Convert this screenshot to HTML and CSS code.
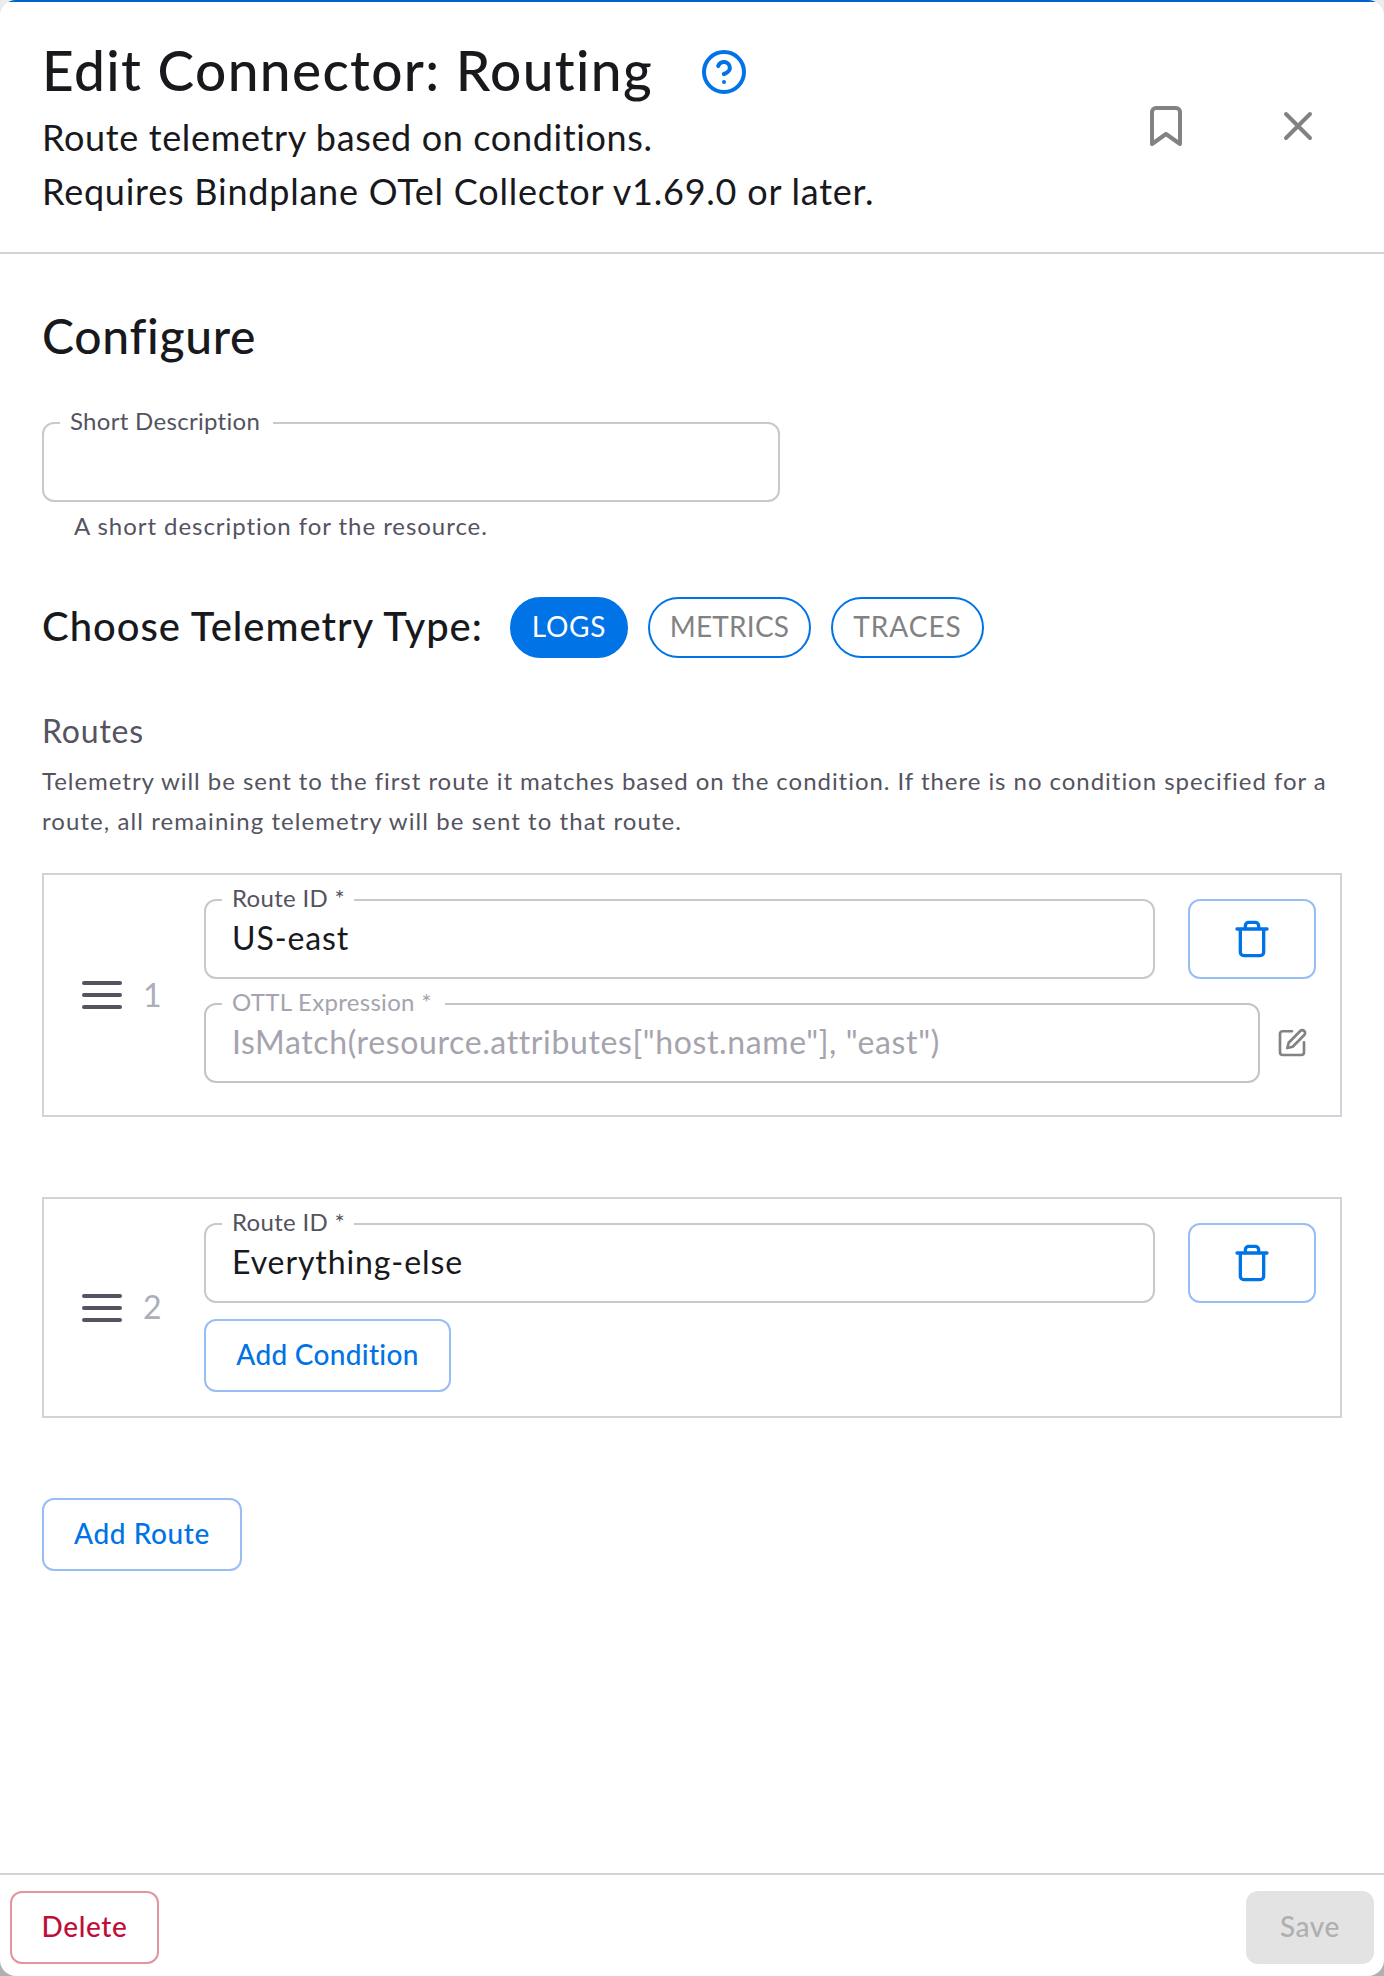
FILE: index.html
```html
<!DOCTYPE html>
<html lang="en">
  <head>
    <meta charset="UTF-8" />
    <meta name="viewport" content="width=device-width, initial-scale=1.0" />
    <title>Edit Connector: Routing</title>
    <link rel="stylesheet" href="styles.css">
  </head>
  <body>
    <div class="dialog">
      <div class="accent"></div>
      <header class="dialog-header">
        <div class="header-text">
          <div class="title-row">
            <h1>Edit Connector: Routing</h1>
            <svg class="icon help-icon" viewBox="0 0 24 24">
              <circle cx="12" cy="12" r="10" />
              <path d="M9.09 9a3 3 0 0 1 5.83 1c0 2-3 3-3 3" />
              <path d="M12 17h.01" />
            </svg>
          </div>
          <p class="subtitle sub-one">Route telemetry based on conditions.</p>
          <p class="subtitle sub-two">Requires Bindplane OTel Collector v1.69.0 or later.</p>
        </div>
        <div class="header-actions">
          <svg class="icon" viewBox="0 0 24 24">
            <path d="M19 21l-7-5-7 5V5a2 2 0 0 1 2-2h10a2 2 0 0 1 2 2z" />
          </svg>
          <svg class="icon" viewBox="0 0 24 24">
            <path d="M18 6L6 18M6 6l12 12" />
          </svg>
        </div>
      </header>

      <main class="dialog-content">
        <h2>Configure</h2>

        <fieldset class="field description-field">
          <legend>Short Description</legend>
        </fieldset>
        <p class="helper">A short description for the resource.</p>

        <div class="telemetry-row">
          <h3>Choose Telemetry Type:</h3>
          <div class="chips">
            <span class="chip chip-logs active">LOGS</span>
            <span class="chip chip-metrics">METRICS</span>
            <span class="chip chip-traces">TRACES</span>
          </div>
        </div>

        <h4>Routes</h4>
        <p class="routes-help">
          Telemetry will be sent to the first route it matches based on the condition. If there is no condition specified for a<br />
          <span class="second-line">route, all remaining telemetry will be sent to that route.</span>
        </p>

        <section class="route">
          <div class="handle">
            <svg class="icon" viewBox="0 0 24 24"><path d="M3 6h18M3 12h18M3 18h18" /></svg>
            <span class="number">1</span>
          </div>
          <div class="route-body">
            <div class="route-row">
              <fieldset class="field">
                <legend class="legend-id">Route ID *</legend>
                <span class="value">US-east</span>
              </fieldset>
              <button class="btn btn-icon" type="button">
                <svg class="icon" viewBox="0 0 24 24">
                  <path d="M3 6h18M19 6v14a2 2 0 0 1-2 2H7a2 2 0 0 1-2-2V6M8 6V4a2 2 0 0 1 2-2h4a2 2 0 0 1 2 2v2" />
                </svg>
              </button>
            </div>
            <div class="condition-row">
              <fieldset class="field disabled">
                <legend class="legend-ottl">OTTL Expression *</legend>
                <span class="value">IsMatch(resource.attributes["host.name"], "east")</span>
              </fieldset>
              <svg class="icon edit-icon" viewBox="0 0 24 24">
                <path d="M12 3.2H5a2 2 0 0 0-2 2V19a2 2 0 0 0 2 2h14a2 2 0 0 0 2-2v-7.5" />
                <path d="M18.2 3a2.1 2.1 0 0 1 3 3L12.5 14.8l-4 1 1-4z" />
              </svg>
            </div>
          </div>
        </section>

        <section class="route route-last">
          <div class="handle">
            <svg class="icon" viewBox="0 0 24 24"><path d="M3 6h18M3 12h18M3 18h18" /></svg>
            <span class="number">2</span>
          </div>
          <div class="route-body">
            <div class="route-row">
              <fieldset class="field">
                <legend class="legend-id">Route ID *</legend>
                <span class="value">Everything-else</span>
              </fieldset>
              <button class="btn btn-icon" type="button">
                <svg class="icon" viewBox="0 0 24 24">
                  <path d="M3 6h18M19 6v14a2 2 0 0 1-2 2H7a2 2 0 0 1-2-2V6M8 6V4a2 2 0 0 1 2-2h4a2 2 0 0 1 2 2v2" />
                </svg>
              </button>
            </div>
            <button class="btn btn-condition" type="button">Add Condition</button>
          </div>
        </section>

        <button class="btn btn-route" type="button">Add Route</button>
      </main>

      <footer class="dialog-footer">
        <button class="btn btn-delete" type="button">Delete</button>
        <button class="btn btn-save" type="button" disabled>Save</button>
      </footer>
    </div>
  </body>
</html>
```

FILE: styles.css
```css
* {
  box-sizing: border-box;
}

body {
  margin: 0;
  background: linear-gradient(#ececec, #b0b0b0);
  font-family: Lato, "Open Sans", sans-serif;
  font-variant-ligatures: none;
  color: #18191d;
}

h1,
h2,
h3,
h4,
p {
  margin: 0;
  white-space: nowrap;
}

.dialog {
  height: 1976px;
  display: flex;
  flex-direction: column;
  background-color: #fff;
  border-radius: 16px;
  overflow: hidden;
}

.accent {
  height: 2px;
  flex: none;
  background-color: #0060cc;
}

.icon {
  width: 48px;
  height: 48px;
  flex: none;
  fill: none;
  stroke: currentColor;
  stroke-width: 2;
  stroke-linecap: round;
  stroke-linejoin: round;
}

.dialog-header {
  height: 252px;
  flex: none;
  display: flex;
  justify-content: space-between;
  align-items: center;
  padding: 0 62px 0 42px;
  border-bottom: 2px solid #d3d2d8;
}

.title-row {
  display: flex;
  align-items: center;
  height: 74px;
  gap: 47px;
}

h1 {
  margin-bottom: 6px;
  font-size: 55px;
  font-weight: 500;
  line-height: 68px;
  letter-spacing: 1.36px;
}

.help-icon {
  margin-bottom: 2px;
  color: #0073e6;
}

.subtitle {
  font-size: 36px;
  line-height: 54px;
}

.sub-one {
  letter-spacing: 0.64px;
}

.sub-two {
  letter-spacing: 0.77px;
}

.header-actions {
  display: flex;
  gap: 84px;
  padding-bottom: 2px;
  color: #828282;
}

.dialog-content {
  flex: 1;
  padding: 46px 42px 0;
}

h2 {
  font-size: 48px;
  font-weight: 500;
  line-height: 72px;
  letter-spacing: 0.7px;
}

/* outlined text field, the legend cuts the notch in the border */
.field {
  margin: 0;
  min-width: 0;
  height: 91px;
  padding: 0 27px 0 16px;
  border: 2px solid #c9c9c9;
  border-radius: 12px;
}

.field legend {
  width: 213px;
  height: 24px;
  padding: 0 0 0 10px;
  font-size: 24px;
  line-height: 20px;
  letter-spacing: 0.3px;
  color: #54535f;
  white-space: nowrap;
}

.field .legend-id {
  width: 132px;
}

.field .legend-ottl {
  width: 223px;
}

.description-field {
  width: 738px;
  margin-top: 39px;
}

.value {
  display: block;
  margin-top: 6px;
  padding-left: 10px;
  font-size: 32px;
  line-height: 40px;
  letter-spacing: 0.9px;
  white-space: nowrap;
}

.disabled {
  border-color: #c4c4c4;
}

.disabled .value,
.disabled legend {
  color: #a5a4ae;
}

.disabled .value {
  letter-spacing: 0.62px;
}

.helper {
  margin: 4px 0 0 32px;
  font-size: 24px;
  line-height: 40px;
  letter-spacing: 0.95px;
  color: #54535f;
}

.telemetry-row {
  display: flex;
  align-items: center;
  margin-top: 51px;
  height: 61px;
}

h3 {
  width: 468px;
  padding-bottom: 3px;
  font-size: 40px;
  font-weight: 500;
  letter-spacing: 0.97px;
}

.chips {
  display: flex;
  gap: 20px;
}

.chip {
  height: 61px;
  border: 2px solid #0073e6;
  border-radius: 31px;
  font-size: 28px;
  line-height: 54px;
  text-align: center;
  color: #828282;
}

.chip-logs {
  width: 118px;
  letter-spacing: 0.7px;
}

.chip-metrics {
  width: 163px;
  letter-spacing: 0.2px;
}

.chip-traces {
  width: 153px;
  letter-spacing: 1px;
}

.chip.active {
  background-color: #0073e6;
  color: #fff;
}

h4 {
  margin-top: 49px;
  font-size: 32px;
  font-weight: 400;
  line-height: 48px;
  letter-spacing: 0.8px;
  color: #54535f;
}

.routes-help {
  margin-top: 6px;
  font-size: 24px;
  line-height: 40px;
  letter-spacing: 0.96px;
  color: #54535f;
}

.second-line {
  letter-spacing: 1.07px;
}

.route {
  display: flex;
  height: 244px;
  margin-top: 32px;
  border: 2px solid #d3d2d8;
}

.route-last {
  height: 221px;
  margin-top: 80px;
}

.handle {
  display: flex;
  align-items: center;
  width: 160px;
  padding-left: 34px;
  color: #54535f;
}

.number {
  margin-left: 17px;
  padding-bottom: 2px;
  font-size: 32px;
  color: #abaebb;
}

.route-body {
  flex: 1;
  padding: 13px 24px 0 0;
}

.route-row {
  display: flex;
  align-items: flex-end;
  justify-content: space-between;
}

.route-row .field {
  width: 951px;
}

.condition-row {
  display: flex;
  align-items: center;
  margin-top: 13px;
}

.condition-row .field {
  width: 1056px;
}

.edit-icon {
  width: 32px;
  height: 32px;
  margin: 10px 0 0 16px;
  color: #828282;
}

.btn {
  height: 73px;
  padding: 0 0 4px;
  border: 2px solid #99bdf5;
  border-radius: 12px;
  background-color: #fff;
  color: #0073e6;
  font-family: inherit;
  font-size: 28px;
  font-weight: 500;
  letter-spacing: 0.6px;
  white-space: nowrap;
}

.btn-icon {
  display: flex;
  align-items: center;
  justify-content: center;
  width: 128px;
  height: 80px;
  padding: 0;
}

.btn-icon .icon {
  width: 40px;
  height: 40px;
}

.btn-condition {
  display: block;
  width: 247px;
  margin-top: 16px;
  letter-spacing: 0.3px;
}

.btn-route {
  width: 200px;
  margin-top: 80px;
}

.dialog-footer {
  display: flex;
  justify-content: space-between;
  height: 103px;
  flex: none;
  padding: 16px 10px 0;
  border-top: 2px solid #d3d2d8;
}

.btn-delete {
  width: 149px;
  border-color: #e2949f;
  color: #bf0e37;
}

.btn-save {
  width: 128px;
  border-color: #e3e3e3;
  background-color: #e3e3e3;
  color: #afafaf;
}
```
